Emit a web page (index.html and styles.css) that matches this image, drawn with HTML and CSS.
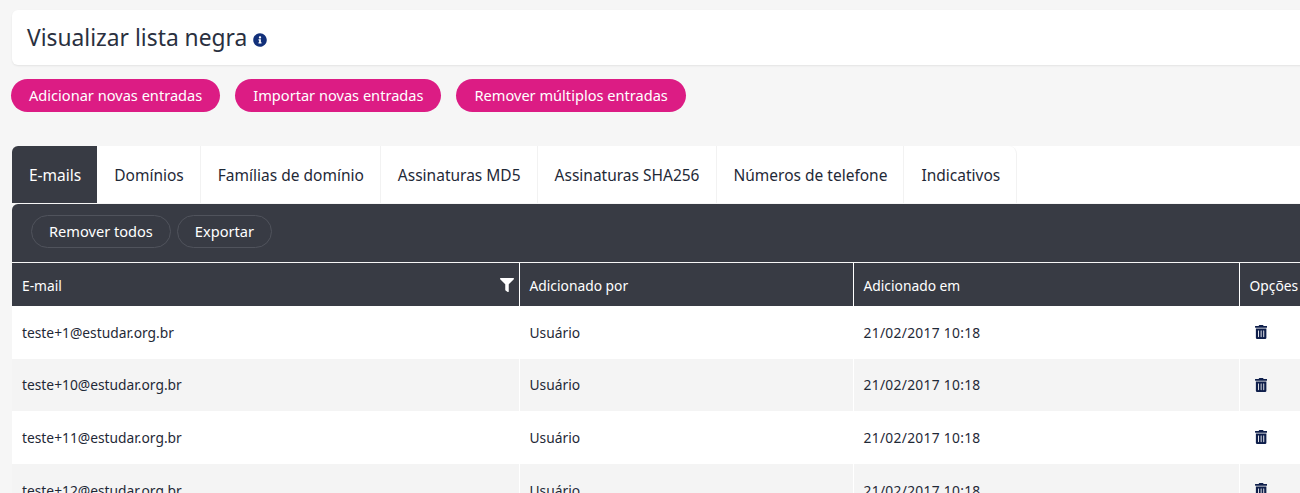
FILE: index.html
```html
<!DOCTYPE html>
<html lang="pt-BR">
  <head>
    <meta charset="UTF-8" />
    <title>Visualizar lista negra</title>
    <link rel="stylesheet" href="styles.css">
  </head>
  <body>
    <svg class="icon-defs">
      <symbol id="trash" viewBox="0 0 448 512">
        <path d="M32 464a48 48 0 0 0 48 48h288a48 48 0 0 0 48-48V128H32zm272-256a16 16 0 0 1 32 0v224a16 16 0 0 1-32 0zm-96 0a16 16 0 0 1 32 0v224a16 16 0 0 1-32 0zm-96 0a16 16 0 0 1 32 0v224a16 16 0 0 1-32 0zM432 32H312l-9.4-18.7A24 24 0 0 0 281.1 0H166.8a23.7 23.7 0 0 0-21.4 13.3L136 32H16A16 16 0 0 0 0 48v32a16 16 0 0 0 16 16h416a16 16 0 0 0 16-16V48a16 16 0 0 0-16-16z"/>
      </symbol>
    </svg>

    <div class="page">
      <header class="title-card">
        <h1>Visualizar lista negra</h1>
        <svg class="info-icon" viewBox="0 0 512 512">
          <path d="M256 8C119 8 8 119 8 256s111 248 248 248 248-111 248-248S393 8 256 8zm0 110c23 0 42 19 42 42s-19 42-42 42-42-19-42-42 19-42 42-42zm56 254c0 7-5 12-12 12h-88c-7 0-12-5-12-12v-24c0-7 5-12 12-12h12v-64h-12c-7 0-12-5-12-12v-24c0-7 5-12 12-12h64c7 0 12 5 12 12v100h12c7 0 12 5 12 12v24z"/>
        </svg>
      </header>

      <div class="actions">
        <button class="btn-pink">Adicionar novas entradas</button>
        <button class="btn-pink">Importar novas entradas</button>
        <button class="btn-pink">Remover múltiplos entradas</button>
      </div>

      <nav class="tabs">
        <a class="tab active">E-mails</a>
        <a class="tab">Domínios</a>
        <a class="tab">Famílias de domínio</a>
        <a class="tab">Assinaturas MD5</a>
        <a class="tab">Assinaturas SHA256</a>
        <a class="tab">Números de telefone</a>
        <a class="tab">Indicativos</a>
      </nav>

      <div class="toolbar">
        <button class="btn-outline">Remover todos</button>
        <button class="btn-outline">Exportar</button>
      </div>

      <table class="list">
        <colgroup>
          <col class="col-email" />
          <col class="col-by" />
          <col class="col-at" />
          <col class="col-opts" />
        </colgroup>
        <thead>
          <tr>
            <th>
              <div class="th-filter">
                E-mail
                <svg class="filter-icon" viewBox="0 0 512 512">
                  <path d="M487 0H25C3 0-9 27 7 43l185 185v206c0 8 4 15 10 20l80 56c16 11 38 0 38-20V228L505 43c16-16 4-43-18-43z"/>
                </svg>
              </div>
            </th>
            <th>Adicionado por</th>
            <th>Adicionado em</th>
            <th>Opções</th>
          </tr>
        </thead>
        <tbody>
          <tr>
            <td>teste+1@estudar.org.br</td>
            <td>Usuário</td>
            <td class="date">21/02/2017 10:18</td>
            <td><svg class="trash-icon"><use href="#trash"></use></svg></td>
          </tr>
          <tr>
            <td>teste+10@estudar.org.br</td>
            <td>Usuário</td>
            <td class="date">21/02/2017 10:18</td>
            <td><svg class="trash-icon"><use href="#trash"></use></svg></td>
          </tr>
          <tr>
            <td>teste+11@estudar.org.br</td>
            <td>Usuário</td>
            <td class="date">21/02/2017 10:18</td>
            <td><svg class="trash-icon"><use href="#trash"></use></svg></td>
          </tr>
          <tr>
            <td>teste+12@estudar.org.br</td>
            <td>Usuário</td>
            <td class="date">21/02/2017 10:18</td>
            <td><svg class="trash-icon"><use href="#trash"></use></svg></td>
          </tr>
        </tbody>
      </table>
    </div>
  </body>
</html>
```

FILE: styles.css
```css
html,
body {
  height: 100%;
  overflow: hidden;
}

body {
  margin: 0;
  background-color: #f6f6f6;
  color: #1f2937;
  font-family: "Noto Sans", "Open Sans", sans-serif;
}

button {
  font-family: inherit;
}

.icon-defs {
  display: none;
}

.page {
  width: 1340px;
  padding: 10px 0 0 12px;
  box-sizing: border-box;
}

.title-card {
  height: 55px;
  padding-left: 15px;
  display: flex;
  align-items: center;
  gap: 6px;
  background-color: white;
  border-radius: 6px;
  box-shadow: 0 1px 2px rgba(0, 0, 0, 0.08);
}

.title-card h1 {
  margin: -1px 0 0;
  font-size: 22.8px;
  font-weight: 400;
  color: #2a3040;
}

.info-icon {
  width: 14px;
  height: 14px;
  margin-top: 5px;
  fill: #12307a;
}

.actions {
  display: flex;
  gap: 15px;
  margin: 14px 0 34px -1px;
}

.btn-pink {
  height: 33px;
  padding: 0 18px 2px;
  border: 0;
  border-radius: 17px;
  background-color: #dc1c84;
  color: white;
  font-size: 14.6px;
}

.tabs {
  display: flex;
  height: 57px;
  background-color: white;
  border-top-left-radius: 6px;
  overflow: hidden;
}

.tab {
  display: flex;
  align-items: center;
  padding: 0 16px 0 17px;
  font-size: 15.5px;
  border-right: 1px solid #f2f2f2;
}

.tab:last-child {
  border-top-right-radius: 8px;
}

.tab.active {
  background-color: #383b44;
  color: white;
  border-right: 0;
}

.toolbar {
  display: flex;
  gap: 6px;
  height: 58px;
  box-sizing: border-box;
  margin-top: 1px;
  padding: 11px 19px;
  background-color: #383b44;
  border-top-left-radius: 6px;
}

.btn-outline {
  height: 33px;
  padding: 0 17px 2px;
  border: 1px solid #50535c;
  border-radius: 17px;
  background: transparent;
  color: white;
  font-size: 14.6px;
}

.list {
  width: 1328px;
  margin-top: 1px;
  border-collapse: collapse;
  table-layout: fixed;
  font-size: 13.8px;
}

.col-email {
  width: 507px;
}

.col-by {
  width: 334px;
}

.col-at {
  width: 386px;
}

.list th {
  height: 43px;
  padding: 1px 10px 0;
  box-sizing: border-box;
  text-align: left;
  font-weight: 400;
  color: white;
  background-color: #383b44;
  border-left: 1px solid white;
}

.list th:first-child,
.list td:first-child {
  border-left: 0;
}

.th-filter {
  display: flex;
  justify-content: space-between;
  align-items: center;
}

.filter-icon {
  width: 14px;
  height: 14px;
  margin-right: -5px;
  fill: white;
}

.list td {
  height: 52.6px;
  padding: 0 10px;
  background-color: white;
  border-left: 1px solid white;
}

.list td.date {
  letter-spacing: 0.3px;
}

.list tbody tr:nth-child(2n) td {
  background-color: #f4f4f4;
}

.trash-icon {
  display: block;
  width: 12.25px;
  height: 14px;
  margin-left: 5px;
  fill: #0f1f4b;
}
```
